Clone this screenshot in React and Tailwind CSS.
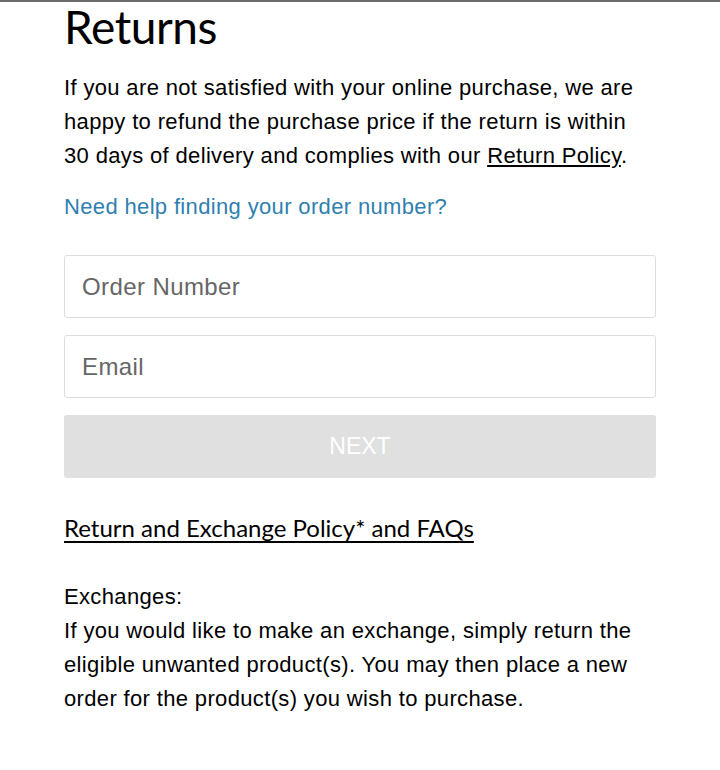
export default function App() {
    return (
        <div className="min-h-[770px] w-[720px] bg-white border-t-2 border-[#6b6b6b] font-['Liberation_Sans',Arial,sans-serif] text-black">
            <div className="px-16 w-[720px]">
                {/* Heading */}
                <h1 className="text-[46px] leading-[48px] pt-[1px] font-['Lato',sans-serif] tracking-[-0.4px]">
                    Returns
                </h1>

                <p className="mt-[20px] text-[22px] leading-[34px] tracking-[0.35px]">
                    If you are not satisfied with your online purchase, we are happy to refund the purchase price if the return is within 30 days of delivery and complies with our{' '}
                    <a href="#" className="underline underline-offset-2">Return Policy</a>.
                </p>

                <a href="#" className="block mt-[17px] text-[22px] leading-[34px] tracking-[0.35px] text-[#2f7fb0]">
                    Need help finding your order number?
                </a>

                {/* Form */}
                <form className="mt-[31px] flex flex-col gap-[17px]">
                    <input
                        type="text"
                        placeholder="Order Number"
                        className="h-[63px] w-full rounded-[3px] border border-[#dcdcdc] px-[17px] text-[24px] tracking-[0.4px] placeholder:text-[#666] outline-none"
                    />
                    <input
                        type="email"
                        placeholder="Email"
                        className="h-[63px] w-full rounded-[3px] border border-[#dcdcdc] px-[17px] text-[24px] tracking-[0.4px] placeholder:text-[#666] outline-none"
                    />
                    <button
                        type="button"
                        disabled
                        className="h-[63px] w-full rounded-[3px] bg-[#e0e0e0] text-white text-[23px] font-medium"
                    >
                        NEXT
                    </button>
                </form>

                <a href="#" className="block mt-[35px] text-[24px] leading-[30px] underline underline-offset-[4px] font-['Lato',sans-serif]">
                    Return and Exchange Policy* and FAQs
                </a>

                {/* Exchanges */}
                <div className="mt-[37px] text-[22px] leading-[34px] tracking-[0.35px]">
                    <p>Exchanges:</p>
                    <p>
                        If you would like to make an exchange, simply return the eligible unwanted product(s). You may then place a new order for the product(s) you wish to purchase.
                    </p>
                </div>
            </div>
        </div>
    );
}
